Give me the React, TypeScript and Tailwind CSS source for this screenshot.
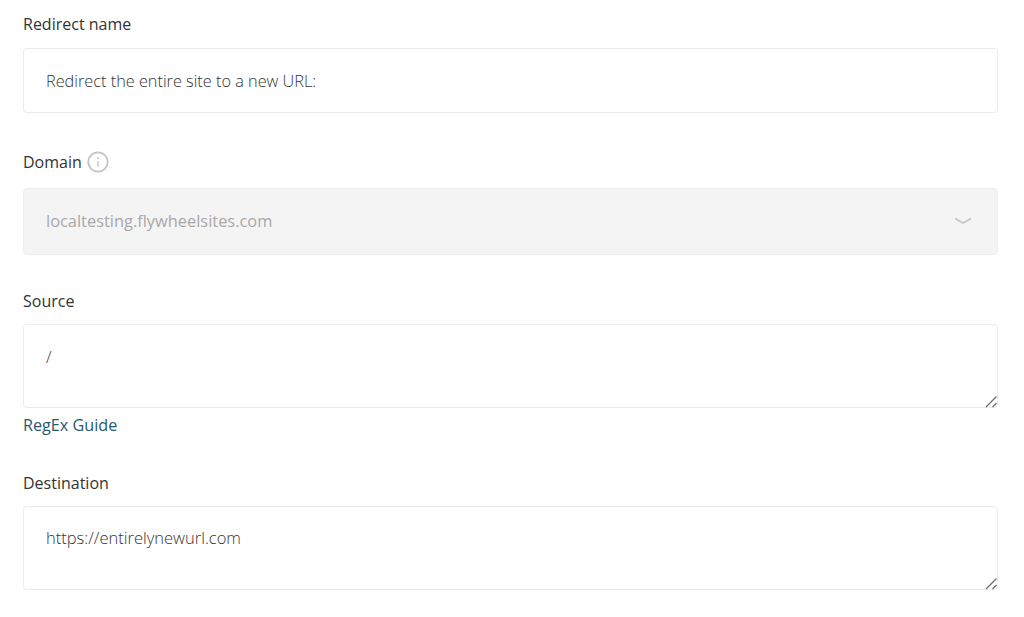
const fieldClass =
  'block w-full rounded-[4px] border border-[#ebebeb] bg-white pl-[22px] pr-[23px] text-[16.3px] font-light text-[#333333] outline-none'

function Label({ children }: { children: React.ReactNode }) {
  return <label className="block h-[24px] text-[16px] leading-[24px] text-[#333333]">{children}</label>
}

function InfoIcon() {
  return (
    <svg width="22" height="22" viewBox="0 0 22 22" fill="none" className="ml-[5px]">
      <circle cx="11" cy="11" r="9.7" stroke="#c4c4c4" strokeWidth="1.8" />
      <circle cx="11" cy="7" r="0.9" fill="#c4c4c4" />
      <path d="M11 10v5.5" stroke="#c4c4c4" strokeWidth="1.4" />
    </svg>
  )
}

function ResizeGrip() {
  return (
    <svg width="13" height="13" viewBox="0 0 13 13" fill="none" className="pointer-events-none absolute bottom-0 right-0">
      <path d="M1 12 11.5 1.5M7.5 12l4-4" stroke="#6f6f6f" strokeWidth="1.3" />
    </svg>
  )
}

export default function App() {
  return (
    <div
      className="h-[617px] w-[1024px] overflow-hidden bg-white pl-[23px] pr-[26px] pt-[12px]"
      style={{ fontFamily: '"Open Sans", sans-serif' }}
    >
      <Label>Redirect name</Label>
      <input
        className={`${fieldClass} mt-[12px] h-[65px]`}
        defaultValue="Redirect the entire site to a new URL:"
      />

      <div className="mt-[37px] flex h-[24px] items-center text-[16px] text-[#333333]">
        <span>Domain</span>
        <InfoIcon />
      </div>
      <div className="relative mt-[14px]">
        <div className="flex h-[67px] items-center rounded-[4px] border border-[#efefef] bg-[#f5f4f5] pl-[22px] pr-[23px] text-[16.4px] text-[#a8a8a8]">
          localtesting.flywheelsites.com
        </div>
        <svg width="18" height="8" viewBox="0 0 18 8" fill="none" className="absolute right-[26px] top-[29px]">
          <path d="M1 1.5 9 6l8-4.5" stroke="#c6c6c6" strokeWidth="1.8" />
        </svg>
      </div>

      <div className="mt-[34px]">
        <Label>Source</Label>
      </div>
      <div className="relative mt-[11px]">
        <textarea
          className={`${fieldClass} h-[84px] resize-none pt-[20px] leading-[24px]`}
          defaultValue="/"
        />
        <ResizeGrip />
      </div>
      <a className="mt-[5px] block h-[24px] text-[16.2px] leading-[24px] text-[#27596d]">RegEx Guide</a>

      <div className="mt-[34px]">
        <Label>Destination</Label>
      </div>
      <div className="relative mt-[11px]">
        <textarea
          className={`${fieldClass} h-[84px] resize-none pt-[19px] text-[16.5px] leading-[24px]`}
          defaultValue="https://entirelynewurl.com"
        />
        <ResizeGrip />
      </div>
    </div>
  )
}
